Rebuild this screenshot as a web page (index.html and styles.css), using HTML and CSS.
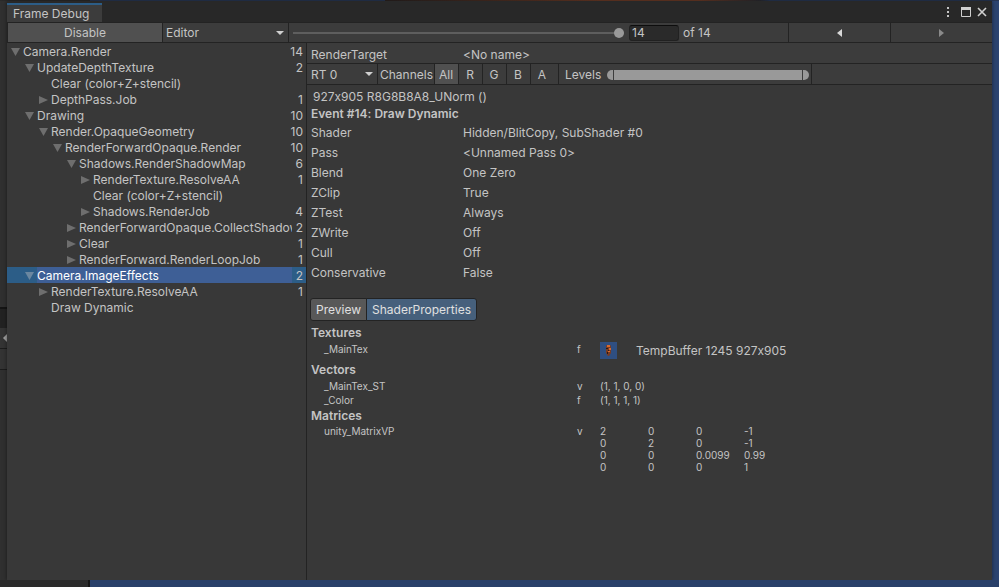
FILE: index.html
```html
<!DOCTYPE html>
<html lang="en">

<head>
    <meta charset="UTF-8">
    <meta name="viewport" content="width=device-width, initial-scale=1.0">
    <title>Frame Debug</title>
    <link rel="stylesheet" href="styles.css">
</head>

<body>
    <div class="behind-top"></div>
    <div class="behind-left">
        <div class="behind-pane"></div>
        <div class="behind-tabs"></div>
        <div class="behind-bar">
            <svg width="4" height="8" viewBox="0 0 4 8"><path d="M4 0v8L0 4z" fill="#a0a0a0"/></svg>
        </div>
        <div class="behind-bar"></div>
    </div>

    <main class="window">
        <header class="titlebar">
            <div class="tab">Frame Debug</div>
            <div class="window-buttons">
                <button type="button" aria-label="Menu">
                    <svg width="4" height="12" viewBox="0 0 4 12" fill="#c4c4c4"><path d="M1 1h2v2H1zM1 5h2v2H1zM1 9h2v2H1z"/></svg>
                </button>
                <button type="button" aria-label="Maximize">
                    <svg width="10" height="10" viewBox="0 0 10 10"><path d="M.5.5h9v9h-9z" fill="none" stroke="#d0d0d0"/><path d="M0 0h10v3H0z" fill="#d0d0d0"/></svg>
                </button>
                <button type="button" aria-label="Close">
                    <svg width="10" height="10" viewBox="0 0 10 10"><path d="M1 1l8 8M9 1L1 9" stroke="#d0d0d0" stroke-width="1.6"/></svg>
                </button>
            </div>
        </header>

        <div class="toolbar">
            <button type="button" class="disable">Disable</button>
            <div class="dropdown target">
                <select aria-label="Target">
                    <option>Editor</option>
                </select>
            </div>
            <input type="range" class="event-slider" min="1" max="14" value="14" aria-label="Event">
            <label class="event-number"><input type="text" value="14"> of 14</label>
            <button type="button" class="step" aria-label="Previous event">
                <svg width="5" height="8" viewBox="0 0 5 8"><path d="M5 0v8L0 4z" fill="#d8d8d8"/></svg>
            </button>
            <button type="button" class="step" aria-label="Next event" disabled>
                <svg width="5" height="8" viewBox="0 0 5 8"><path d="M0 0v8l5-4z" fill="#8a8a8a"/></svg>
            </button>
        </div>

        <div class="content">
            <ul class="tree">
                <li class="level-0"><button type="button" class="fold open" aria-label="Collapse"></button><span class="name">Camera.Render</span><span class="count">14</span></li>
                <li class="level-1"><button type="button" class="fold open" aria-label="Collapse"></button><span class="name">UpdateDepthTexture</span><span class="count">2</span></li>
                <li class="level-2 leaf"><span class="name">Clear (color+Z+stencil)</span></li>
                <li class="level-2"><button type="button" class="fold" aria-label="Expand"></button><span class="name">DepthPass.Job</span><span class="count">1</span></li>
                <li class="level-1"><button type="button" class="fold open" aria-label="Collapse"></button><span class="name">Drawing</span><span class="count">10</span></li>
                <li class="level-2"><button type="button" class="fold open" aria-label="Collapse"></button><span class="name">Render.OpaqueGeometry</span><span class="count">10</span></li>
                <li class="level-3"><button type="button" class="fold open" aria-label="Collapse"></button><span class="name">RenderForwardOpaque.Render</span><span class="count">10</span></li>
                <li class="level-4"><button type="button" class="fold open" aria-label="Collapse"></button><span class="name">Shadows.RenderShadowMap</span><span class="count">6</span></li>
                <li class="level-5"><button type="button" class="fold" aria-label="Expand"></button><span class="name">RenderTexture.ResolveAA</span><span class="count">1</span></li>
                <li class="level-5 leaf"><span class="name">Clear (color+Z+stencil)</span></li>
                <li class="level-5"><button type="button" class="fold" aria-label="Expand"></button><span class="name">Shadows.RenderJob</span><span class="count">4</span></li>
                <li class="level-4"><button type="button" class="fold" aria-label="Expand"></button><span class="name">RenderForwardOpaque.CollectShadows</span><span class="count">2</span></li>
                <li class="level-4"><button type="button" class="fold" aria-label="Expand"></button><span class="name">Clear</span><span class="count">1</span></li>
                <li class="level-4"><button type="button" class="fold" aria-label="Expand"></button><span class="name">RenderForward.RenderLoopJob</span><span class="count">1</span></li>
                <li class="level-1 selected"><button type="button" class="fold open" aria-label="Collapse"></button><span class="name">Camera.ImageEffects</span><span class="count">2</span></li>
                <li class="level-2"><button type="button" class="fold" aria-label="Expand"></button><span class="name">RenderTexture.ResolveAA</span><span class="count">1</span></li>
                <li class="level-2 leaf"><span class="name">Draw Dynamic</span></li>
            </ul>

            <section class="details">
                <div class="render-target">
                    <span>RenderTarget</span>
                    <span>&lt;No name&gt;</span>
                </div>

                <div class="channel-bar">
                    <div class="dropdown rt">
                        <select aria-label="Render target index">
                            <option>RT 0</option>
                        </select>
                    </div>
                    <span class="channels">Channels</span>
                    <button type="button" class="channel active">All</button>
                    <button type="button" class="channel">R</button>
                    <button type="button" class="channel">G</button>
                    <button type="button" class="channel">B</button>
                    <button type="button" class="channel last">A</button>
                    <div class="levels">
                        <span>Levels</span>
                        <div class="min-max">
                            <div class="min-max-bar"></div>
                            <input type="range" class="min" min="0" max="100" value="0" aria-label="Black level">
                            <input type="range" class="max" min="0" max="100" value="100" aria-label="White level">
                        </div>
                    </div>
                </div>

                <p class="format">927x905 R8G8B8A8_UNorm ()</p>
                <h2>Event #14: Draw Dynamic</h2>
                <dl class="state">
                    <dt>Shader</dt><dd>Hidden/BlitCopy, SubShader #0</dd>
                    <dt>Pass</dt><dd>&lt;Unnamed Pass 0&gt;</dd>
                    <dt>Blend</dt><dd>One Zero</dd>
                    <dt>ZClip</dt><dd>True</dd>
                    <dt>ZTest</dt><dd>Always</dd>
                    <dt>ZWrite</dt><dd>Off</dd>
                    <dt>Cull</dt><dd>Off</dd>
                    <dt>Conservative</dt><dd>False</dd>
                </dl>

                <div class="view-tabs">
                    <button type="button">Preview</button>
                    <button type="button" class="active">ShaderProperties</button>
                </div>

                <h2>Textures</h2>
                <table class="props">
                    <tr>
                        <td class="prop-name">_MainTex</td>
                        <td class="stage">f</td>
                        <td>
                            <div class="texture">
                                <svg width="17" height="17" viewBox="0 0 17 17">
                                    <path d="M0 0h17v17H0z" fill="#2f4f82"/>
                                    <path d="M7 3h3l1 1v7l-2 3H8l-2-3V4z" fill="#7a3c22"/>
                                    <path d="M7 3h3v2H7zM9 6h2v2H9zM8 9h2v1H8z" fill="#d9692e"/>
                                    <path d="M6 6h2v1H6zM8 8h1v1H8zM7 10h1v2H7z" fill="#2b1a1a"/>
                                </svg>
                                <span>TempBuffer 1245 927x905</span>
                            </div>
                        </td>
                    </tr>
                </table>

                <h2>Vectors</h2>
                <table class="props">
                    <tr><td class="prop-name">_MainTex_ST</td><td class="stage">v</td><td>(1, 1, 0, 0)</td></tr>
                    <tr><td class="prop-name">_Color</td><td class="stage">f</td><td>(1, 1, 1, 1)</td></tr>
                </table>

                <h2>Matrices</h2>
                <table class="props matrix">
                    <tr><td class="prop-name">unity_MatrixVP</td><td class="stage">v</td><td class="cell">2</td><td class="cell">0</td><td class="cell">0</td><td>-1</td></tr>
                    <tr><td></td><td></td><td>0</td><td>2</td><td>0</td><td>-1</td></tr>
                    <tr><td></td><td></td><td>0</td><td>0</td><td>0.0099</td><td>0.99</td></tr>
                    <tr><td></td><td></td><td>0</td><td>0</td><td>0</td><td>1</td></tr>
                </table>
            </section>
        </div>
    </main>

    <div class="behind-bottom"></div>
</body>

</html>
```
FILE: styles.css
```css
* {
    box-sizing: border-box;
}

body {
    margin: 0;
    min-height: 100vh;
    display: grid;
    grid-template-columns: 7px 1fr 7px;
    grid-template-rows: 1px 1fr 7px;
    background-color: #2c4470;
    color: #c4c4c4;
    font-family: Inter, sans-serif;
    font-size: 12px;
    font-feature-settings: "calt" 0;
    line-height: 16px;
    overflow: hidden;
}

button,
input,
select {
    margin: 0;
    padding: 0;
    border: none;
    border-radius: 0;
    background: none;
    color: inherit;
    font: inherit;
    outline: none;
}

svg {
    display: block;
}

/* Editor windows behind the debugger */
.behind-top {
    grid-column: 1 / 4;
    background: linear-gradient(to right, #2a2a2a 90px, #273654 90px 385px, #2a2220 385px, #6b3a26 600px 700px, #2a2a30 760px, #273654 770px);
}

.behind-left {
    display: flex;
    flex-direction: column;
    background-color: #303030;
}

.behind-pane {
    height: 308px;
    border-bottom: 2px solid #151515;
}

.behind-tabs {
    height: 19px;
    background-color: #222;
}

.behind-bar {
    display: flex;
    align-items: center;
    justify-content: flex-end;
    height: 21px;
    border-bottom: 1px solid #1c1c1c;
    background-color: #343434;
}

.behind-bottom {
    grid-column: 1 / 4;
    background: linear-gradient(to right, #2b2b2b 88px, #151515 88px 90px, #294069 90px);
}

.window {
    display: flex;
    flex-direction: column;
    grid-column: 2;
    background-color: #383838;
    box-shadow: 0 0 4px rgba(0, 0, 0, 0.5);
}

.titlebar {
    display: flex;
    align-items: flex-end;
    justify-content: space-between;
    height: 21px;
    background-color: #282828;
}

.tab {
    height: 19px;
    padding: 1px 13px 0 6px;
    border-top: 2px solid #2c5d87;
    background-color: #3c3c3c;
}

.window-buttons {
    display: flex;
    align-items: center;
    gap: 6px;
    height: 21px;
    padding-right: 5px;
}

.window-buttons button:first-child {
    margin-right: 5px;
}

.toolbar {
    display: flex;
    height: 21px;
    border-top: 1px solid #232323;
    border-bottom: 1px solid #232323;
    background-color: #3c3c3c;
}

.disable {
    width: 156px;
    border-left: 1px solid #232323;
    border-right: 1px solid #232323;
    background-color: #505050;
}

.dropdown {
    position: relative;
    border-right: 1px solid #232323;
}

.dropdown::after {
    content: "";
    position: absolute;
    top: 8px;
    right: 4px;
    border: 4px solid transparent;
    border-top-color: #d0d0d0;
    border-bottom: none;
    pointer-events: none;
}

.dropdown select {
    width: 100%;
    height: 100%;
    padding-left: 3px;
    appearance: none;
}

.target {
    width: 126px;
}

input[type="range"] {
    appearance: none;
}

.event-slider {
    flex: 1;
    min-width: 0;
    margin: 0 5px 0 4px;
}

.event-slider::-webkit-slider-runnable-track {
    height: 2px;
    background-color: #5e5e5e;
}

.event-slider::-webkit-slider-thumb {
    appearance: none;
    width: 10px;
    height: 10px;
    margin-top: -4px;
    border-radius: 50%;
    background-color: #999;
}

.event-number {
    display: flex;
    align-items: center;
    gap: 4px;
    width: 159px;
}

.event-number input {
    width: 50px;
    height: 16px;
    padding-left: 2px;
    border: 1px solid #212121;
    border-top-color: #0d0d0d;
    border-radius: 3px;
    background-color: #2a2a2a;
}

.step {
    display: flex;
    align-items: center;
    justify-content: center;
    width: 102px;
    border-left: 1px solid #232323;
}

.content {
    display: flex;
    flex: 1;
}

/* Event tree */
.tree {
    width: 300px;
    margin: 0;
    padding: 0;
    border-right: 1px solid #232323;
    list-style: none;
}

.tree li {
    display: flex;
    gap: 3px;
    height: 16px;
    padding-right: 3px;
    line-height: 18px;
}

.tree .name {
    flex: 1;
    min-width: 0;
    overflow: hidden;
    white-space: nowrap;
}

.tree .count {
    padding-left: 1px;
}

.fold {
    width: 9px;
    padding-top: 2px;
    flex: none;
}

.fold::before {
    content: "";
    display: block;
    width: 9px;
    height: 8px;
    background-color: #6e6e6e;
    clip-path: polygon(0 0, 100% 50%, 0 100%);
}

.fold.open::before {
    clip-path: polygon(0 0, 100% 0, 50% 100%);
}

.level-0 {
    padding-left: 4px;
}

.level-1 {
    padding-left: 18px;
}

.level-2 {
    padding-left: 32px;
}

.level-3 {
    padding-left: 46px;
}

.level-4 {
    padding-left: 60px;
}

.level-5 {
    padding-left: 74px;
}

.leaf .name {
    padding-left: 12px;
}

.selected {
    background-color: #2c5d87;
    color: #fff;
}

.selected .name {
    background-color: #3e5f96;
}

.selected .count {
    color: #c4c4c4;
}

.selected .fold::before {
    background-color: #6b87a0;
}

/* Event details */
.details {
    flex: 1;
    min-width: 0;
}

.render-target {
    display: grid;
    grid-template-columns: 152px 1fr;
    height: 21px;
    padding: 0 4px;
    border-bottom: 1px solid #232323;
    background-color: #3c3c3c;
    line-height: 24px;
}

.channel-bar {
    display: flex;
    height: 21px;
    border-bottom: 1px solid #232323;
    background-color: #3c3c3c;
    line-height: 22px;
}

.rt {
    width: 71px;
}

.rt select {
    padding-left: 4px;
}

.channels {
    width: 57px;
    padding-left: 2px;
    border-right: 1px solid #232323;
}

.channel {
    width: 24px;
    padding-right: 1px;
    border-right: 1px solid #232323;
}

.channel.last {
    width: 28px;
    padding-right: 5px;
}

.channel.active {
    background-color: #505050;
}

.levels {
    display: flex;
    align-items: center;
    gap: 6px;
    padding: 2px 2px 0 6px;
    border-right: 1px solid #232323;
}

.min-max {
    display: grid;
    width: 202px;
    height: 10px;
}

.min-max > * {
    grid-area: 1 / 1;
}

.min-max-bar {
    margin: 0 7px;
    background-color: #999;
}

.min-max input {
    width: 100%;
    height: 10px;
    pointer-events: none;
}

.min-max input::-webkit-slider-thumb {
    appearance: none;
    width: 6px;
    height: 10px;
    background-color: #999;
    pointer-events: auto;
}

.min::-webkit-slider-thumb {
    border-radius: 5px 0 0 5px;
}

.max::-webkit-slider-thumb {
    border-radius: 0 5px 5px 0;
}

.format {
    margin: 0;
    padding: 4px 6px 0;
}

h2 {
    margin: 0;
    padding: 0 4px;
    font-size: 12px;
    font-weight: 600;
    line-height: 18px;
}

.state {
    display: grid;
    grid-template-columns: 152px 1fr;
    margin: 0;
    padding: 0 4px;
    line-height: 20px;
}

.state dd {
    margin: 0;
}

.view-tabs {
    display: flex;
    margin: 15px 3px 3px;
}

.view-tabs button {
    height: 23px;
    padding: 0 5px;
    border: 1px solid #232323;
    border-radius: 3px 0 0 3px;
    background-color: #585858;
    color: #e0e0e0;
}

.view-tabs button.active {
    margin-left: -1px;
    border-radius: 0 3px 3px 0;
    background-color: #46607c;
}

.props {
    border-collapse: collapse;
    font-size: 10px;
    line-height: 14px;
}

.props td {
    padding: 0;
    vertical-align: top;
}

.props .prop-name {
    width: 270px;
    padding-left: 17px;
}

.props .stage {
    width: 23px;
}

.matrix {
    line-height: 12px;
}

.matrix .cell {
    width: 48px;
}

.texture {
    display: flex;
    align-items: center;
    gap: 19px;
    padding-bottom: 2px;
    font-size: 12px;
}
```
